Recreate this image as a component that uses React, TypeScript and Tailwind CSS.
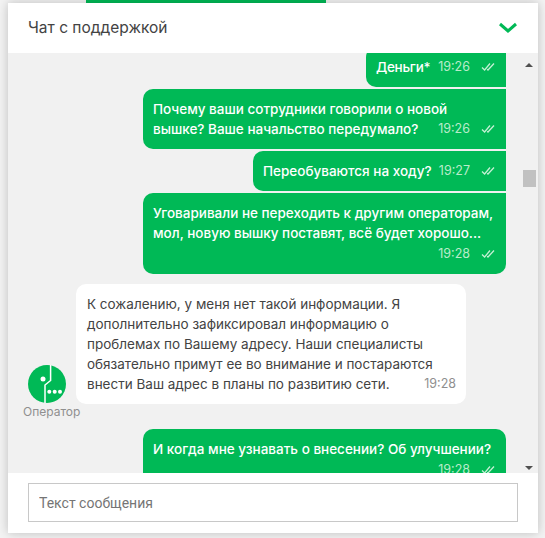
import { ReactNode } from 'react';

function DoubleCheck() {
  return (
    <svg width="14" height="10" viewBox="0 0 14 10" fill="none" stroke="#c4f0d4" strokeWidth="1.3" className="shrink-0">
      <path d="M1 5.5 L3.6 8 L9 1.5" />
      <path d="M6.2 7.2 L7 8 L13 1.5" />
    </svg>
  );
}

function Meta({ time }: { time: string }) {
  return (
    <span className="flex shrink-0 items-center gap-[11px] pr-[1px] text-[12.5px] font-normal text-[#b9ecca]">
      {time}
      <DoubleCheck />
    </span>
  );
}

function MyBubble({ children, className }: { children: ReactNode; className?: string }) {
  return (
    <div className={`shrink-0 self-end rounded-l-[10px] bg-[#00b956] p-[10px] font-medium text-white ${className ?? ''}`}>
      {children}
    </div>
  );
}

function OperatorLogo() {
  return (
    <svg width="38" height="38" viewBox="0 0 38 38">
      <circle cx="19" cy="19" r="19" fill="#00b956" />
      <path d="M22.6 0 V15.5 L17 20 V38" fill="none" stroke="#fff" strokeWidth="1.5" />
      <circle cx="15" cy="14" r="2.5" fill="#fff" />
      <circle cx="21.3" cy="26.7" r="2" fill="#fff" />
      <circle cx="26.7" cy="26.7" r="2" fill="#fff" />
      <circle cx="32" cy="26.7" r="2" fill="#fff" />
    </svg>
  );
}

export default function App() {
  return (
    <div className="flex h-[538px] w-[545px] flex-col bg-[#f3f3f3] font-['Inter',sans-serif] text-[13.5px] leading-5">
      <div className="ml-[86px] h-[3px] w-[240px] shrink-0 bg-[#00b956]" />
      <div className="relative ml-2 flex h-[530px] w-[530px] shrink-0 flex-col bg-white shadow-[0_0_10px_rgba(0,0,0,0.22)]">
        {/* Header */}
        <div className="flex h-[50px] shrink-0 items-center justify-between pl-5 pr-[21px]">
          <span className="text-[15.5px] text-[#434343]">Чат с поддержкой</span>
          <svg width="18" height="12" viewBox="0 0 18 12" fill="none" stroke="#00b956" strokeWidth="3">
            <path d="M1 2 L9 9 L17 2" />
          </svg>
        </div>

        {/* Messages */}
        <div className="relative flex h-[420px] shrink-0 overflow-hidden bg-[#f1f1f1]">
          <div className="flex w-[498px] flex-col">
            <MyBubble className="-mt-[6px] flex w-[140px] items-center justify-between">
              <span className="tracking-[-0.3px]">Деньги*</span>
              <Meta time="19:26" />
            </MyBubble>
            <MyBubble className="mt-[2px] w-[363px]">
              <div>Почему ваши сотрудники говорили о новой</div>
              <div className="flex justify-between">
                <span>вышке? Ваше начальство передумало?</span>
                <Meta time="19:26" />
              </div>
            </MyBubble>
            <MyBubble className="mt-[2px] flex w-[253px] items-center justify-between">
              <span>Переобуваются на ходу?</span>
              <Meta time="19:27" />
            </MyBubble>
            <MyBubble className="mt-[2px] w-[363px] rounded-br-[10px]">
              <div>Уговаривали не переходить к другим операторам,</div>
              <div>мол, новую вышку поставят, всё будет хорошо...</div>
              <div className="mt-[1px] flex justify-end">
                <Meta time="19:28" />
              </div>
            </MyBubble>

            {/* Operator reply */}
            <div className="mt-[10px] flex h-[136px] shrink-0 items-start">
              <div className="ml-[15px] mr-[-2px] flex w-[55px] shrink-0 flex-col items-start self-end">
                <div className="ml-[5px] flex">
                  <OperatorLogo />
                </div>
                <span className="mt-[1px] text-[12px] leading-4 text-[#8f8f8f]">Оператор</span>
              </div>
              <div className="w-[390px] rounded-[10px] bg-white p-[10px] pl-[11px] text-[#434343]">
                <div>К сожалению, у меня нет такой информации. Я</div>
                <div>дополнительно зафиксировал информацию о</div>
                <div>проблемах по Вашему адресу. Наши специалисты</div>
                <div>обязательно примут ее во внимание и постараются</div>
                <div className="flex justify-between">
                  <span>внести Ваш адрес в планы по развитию сети.</span>
                  <span className="text-[12.5px] text-[#8f8f8f]">19:28</span>
                </div>
              </div>
            </div>

            <MyBubble className="mt-[9px] w-[363px] rounded-tr-[10px]">
              <div>И когда мне узнавать о внесении? Об улучшении?</div>
              <div className="mt-[1px] flex justify-end">
                <Meta time="19:28" />
              </div>
            </MyBubble>
          </div>

          {/* Scrollbar */}
          <div className="absolute right-0 top-0 flex h-full w-[18px] flex-col items-center bg-[#f1f1f1]">
            <div className="mt-[10px] border-x-4 border-b-4 border-x-transparent border-b-[#505050]" />
            <div className="mt-[103px] h-[17px] w-[13px] bg-[#c1c1c1]" />
            <div className="mb-[3px] mt-auto border-x-4 border-t-4 border-x-transparent border-t-[#505050]" />
          </div>
        </div>

        {/* Input */}
        <div className="flex flex-1 items-start bg-white pl-5 pt-[10px]">
          <input
            placeholder="Текст сообщения"
            className="h-[39px] w-[490px] border border-[#c8c8c8] bg-white px-[10px] font-['Roboto',sans-serif] text-[14px] outline-none placeholder:text-[#757575]"
          />
        </div>
      </div>
    </div>
  );
}
